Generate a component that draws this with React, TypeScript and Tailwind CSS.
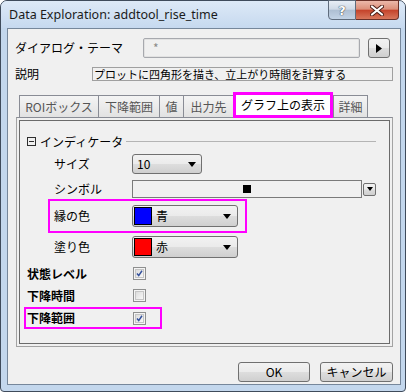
import React from "react";

function Arrow({ className = "" }: { className?: string }) {
  return (
    <svg width="8" height="5" viewBox="0 0 8 5" className={className} aria-hidden>
      <path d="M0 0H8L4 5Z" fill="#000" />
    </svg>
  );
}

function Check({ checked }: { checked: boolean }) {
  return (
    <div className="w-[13px] h-[13px] border border-[#8e8f8f] bg-[#f4f4f4] p-px">
      <div className="w-full h-full border border-[#c5c5c5] bg-linear-to-br from-[#dcdcdc] to-[#f8f8f8] flex items-center justify-center">
        {checked && (
          <svg width="9" height="9" viewBox="0 0 9 9" aria-hidden>
            <path d="M1.3 4.6L3.5 7.2L7.7 1" fill="none" stroke="#34519c" strokeWidth="1.9" />
          </svg>
        )}
      </div>
    </div>
  );
}

// win7 style push face
const face = "bg-[linear-gradient(#f2f2f2_0%,#ebebeb_48%,#dddddd_52%,#cfcfcf_100%)]";

function ColorCombo({ color, name }: { color: string; name: string }) {
  return (
    <div className={`w-[106px] h-[22px] rounded-[3px] border border-[#707070] ${face} flex items-center pl-px pr-[6px]`}>
      <div className="w-[18px] h-[18px] border border-black" style={{ background: color }} />
      <span className="ml-[4px] text-[12px]">{name}</span>
      <Arrow className="ml-auto" />
    </div>
  );
}

function Tab({ label, w, last }: { label: string; w: string; last?: boolean }) {
  return (
    <div
      className={`${w} h-[22px] border-t border-l ${last ? "border-r" : ""} border-[#898c95] bg-linear-to-b from-[#f4f4f4] to-[#e2e2e2] text-[#555555] flex items-center justify-center`}
    >
      {label}
    </div>
  );
}

export default function App() {
  return (
    <div className="w-[409px] h-[392px] bg-white font-['Noto_Sans_CJK_JP',sans-serif] text-[12px] leading-none text-black">
      <div className="w-[406px] h-[392px] rounded-t-[7px] rounded-b-[4px] border border-[#3f4b5b] bg-[#c3d7ed] flex flex-col">
        {/* title bar */}
        <div className="h-[27px] flex items-start rounded-t-[6px] bg-linear-to-b from-[#dde9f7] to-[#c6d9ef]">
          <div className="pl-[8px] pt-[8px] font-['Noto_Sans',sans-serif] text-[12.5px] text-[#1b1b1b]">
            Data Exploration: addtool_rise_time
          </div>
          <div className="ml-auto mr-[6px] -mt-px flex h-[20px]">
            <div className="w-[28px] h-[20px] rounded-bl-[4px] border border-[#5f6c7d] bg-[linear-gradient(#e8eef6_0%,#cfdae7_45%,#aebfd3_52%,#c3d3e6_100%)] flex items-center justify-center">
              <span className="font-['DejaVu_Sans',sans-serif] font-bold text-[13px] text-white [text-shadow:0_0_1px_#2a3440,0_0_1px_#2a3440]">
                ?
              </span>
            </div>
            <div className="w-[43px] h-[20px] rounded-br-[4px] border border-l-0 border-[#6a3028] bg-[linear-gradient(#ecb8aa_0%,#dc8f7a_45%,#c5442c_52%,#d8775c_100%)] flex items-center justify-center">
              <svg width="14" height="11" viewBox="0 0 14 11" aria-hidden>
                <path d="M2 1.5L12 9.5M12 1.5L2 9.5" stroke="#4a1d16" strokeWidth="4" strokeLinecap="round" />
                <path d="M2 1.5L12 9.5M12 1.5L2 9.5" stroke="#fff" strokeWidth="2.2" strokeLinecap="round" />
              </svg>
            </div>
          </div>
        </div>

        {/* client area */}
        <div className="ml-[6px] w-[394px] h-[357px] border border-[#76879b] bg-[#f0f0f0] pl-[7px] pt-[9px]">
          <div className="flex h-[20px] items-center">
            <div className="w-[128px]">ダイアログ・テーマ</div>
            <div className="w-[217px] h-[20px] rounded-[2px] border border-[#a7a9ae] shadow-[inset_0_0_0_1px_#e2e2e2] flex items-center pl-[9px] text-[#8a8a8a]">
              *
            </div>
            <div className={`ml-[8px] w-[22px] h-[20px] rounded-[3px] border border-[#707070] ${face} flex items-center justify-center`}>
              <svg width="6" height="9" viewBox="0 0 6 9" aria-hidden>
                <path d="M0 0L6 4.5L0 9Z" fill="#000" />
              </svg>
            </div>
          </div>

          <div className="mt-[9px] flex h-[14px] items-center">
            <div className="w-[77px]">説明</div>
            <div className="w-[301px] h-[14px] border border-[#a0a0a0] flex items-center pl-px text-[11px]">
              プロットに四角形を描き、立上がり時間を計算する
            </div>
          </div>

          {/* tabs */}
          <div className="mt-[11px] ml-px w-[377px]">
            <div className="relative z-10 flex items-end h-[25px] pl-[3px]">
              <Tab label="ROIボックス" w="w-[79px]" />
              <Tab label="下降範囲" w="w-[61px]" />
              <Tab label="値" w="w-[24px]" />
              <Tab label="出力先" w="w-[50px]" />
              <div className="w-[100px] h-[26px] -mb-px border-[3px] border-[#ff00ff] bg-white flex items-center justify-center">
                グラフ上の表示
              </div>
              <Tab label="詳細" w="w-[35px]" last />
            </div>
            <div className="h-[230px] border border-[#a3a3a3] border-t-[#898c95] p-[2px]">
              <div className="h-full border border-[#6b6b6b] flex flex-col">
                <div className="mt-[14px] h-[13px] flex items-center pl-[7px] pr-[13px]">
                  <div className="w-[9px] h-[9px] border border-[#2e2e2e] flex items-center justify-center">
                    <div className="w-[5px] h-px bg-[#2e2e2e]" />
                  </div>
                  <span className="ml-[4px]">インディケータ</span>
                  <div className="flex-1 ml-[3px] h-px bg-[#b4b4b4]" />
                </div>

                <div className="mt-[6px] h-[20px] flex items-center pl-[34px]">
                  <div className="w-[78px]">サイズ</div>
                  <div className={`w-[70px] h-[20px] rounded-[3px] border border-[#707070] ${face} flex items-center pl-[4px] pr-[5px]`}>
                    <span>10</span>
                    <Arrow className="ml-auto" />
                  </div>
                </div>

                <div className="mt-[6px] h-[18px] flex items-center pl-[34px]">
                  <div className="w-[78px]">シンボル</div>
                  <div className="w-[230px] h-[18px] border border-[#7a7a7a] flex items-center justify-center">
                    <div className="w-[8px] h-[8px] bg-black" />
                  </div>
                  <div className={`ml-px w-[13px] h-[13px] rounded-[2px] border border-[#707070] ${face} flex items-center justify-center`}>
                    <svg width="6" height="4" viewBox="0 0 6 4" aria-hidden>
                      <path d="M0 0H6L3 4Z" fill="#000" />
                    </svg>
                  </div>
                </div>

                <div className="mt-px ml-[28px] w-[199px] h-[34px] border-2 border-[#ff00ff] flex items-center pl-[4px]">
                  <div className="w-[78px]">縁の色</div>
                  <ColorCombo color="#0000ff" name="青" />
                </div>

                <div className="mt-[3px] h-[22px] flex items-center pl-[34px]">
                  <div className="w-[78px]">塗り色</div>
                  <ColorCombo color="#ff0000" name="赤" />
                </div>

                <div className="mt-[9px] h-[13px] flex items-center pl-[7px]">
                  <div className="w-[106px] font-bold">状態レベル</div>
                  <Check checked />
                </div>
                <div className="mt-[9px] h-[13px] flex items-center pl-[7px]">
                  <div className="w-[106px] font-bold">下降時間</div>
                  <Check checked={false} />
                </div>
                <div className="mt-[5px] ml-[4px] w-[138px] h-[22px] border-2 border-[#ff00ff] flex items-center pl-px">
                  <div className="w-[106px] font-bold">下降範囲</div>
                  <Check checked />
                </div>
              </div>
            </div>

            <div className="mt-[15px] flex justify-end gap-[10px]">
              <div className={`w-[72px] h-[20px] rounded-[3px] border border-[#707070] ${face} flex items-center justify-center`}>
                OK
              </div>
              <div className={`w-[73px] h-[20px] rounded-[3px] border border-[#707070] ${face} flex items-center justify-center`}>
                キャンセル
              </div>
            </div>
          </div>
        </div>
      </div>
    </div>
  );
}
